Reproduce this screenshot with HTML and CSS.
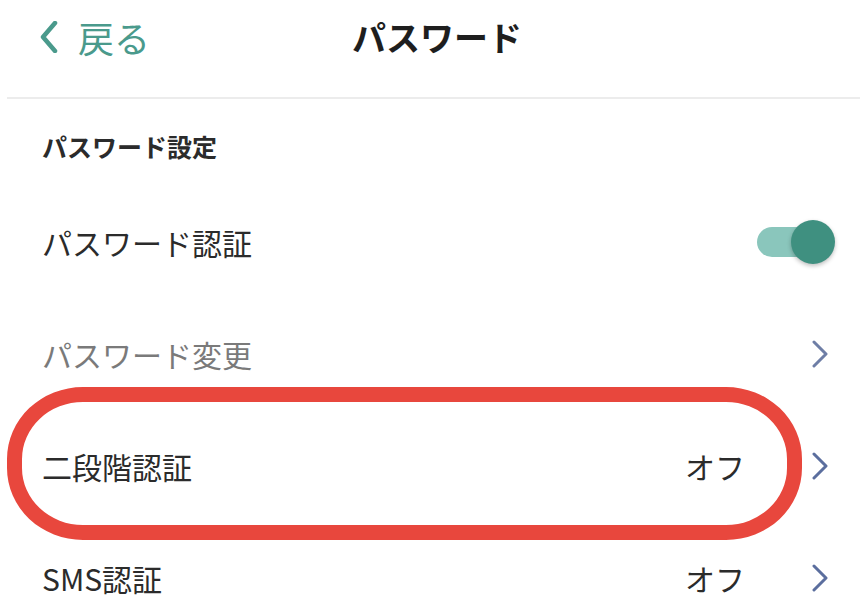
FILE: index.html
```html
<!DOCTYPE html>
<html lang="ja">
<head>
    <meta charset="UTF-8">
    <meta name="viewport" content="width=device-width, initial-scale=1.0">
    <title>パスワード</title>
    <link rel="stylesheet" href="styles.css">
</head>
<body>
    <div class="screen">
        <header class="top-bar">
            <div class="back">
                <svg class="back-icon" width="18" height="32" viewBox="0 0 18 32">
                    <path d="M15 2 L3 16 L15 30" fill="none" stroke="#4a9a8c" stroke-width="4.5" stroke-linecap="round" stroke-linejoin="round"/>
                </svg>
                <span>戻る</span>
            </div>
            <h1 class="title">パスワード</h1>
        </header>

        <div class="section-title">パスワード設定</div>

        <div class="row">
            <span class="label">パスワード認証</span>
            <div class="toggle on">
                <div class="track"></div>
                <div class="knob"></div>
            </div>
        </div>

        <div class="row disabled">
            <span class="label">パスワード変更</span>
            <svg class="chevron" width="18" height="28" viewBox="0 0 18 28">
                <path d="M3 2 L15 14 L3 26" fill="none" stroke="#6e7ea6" stroke-width="3" stroke-linecap="round" stroke-linejoin="round"/>
            </svg>
        </div>

        <div class="row highlighted">
            <span class="label">二段階認証</span>
            <span class="value">オフ</span>
            <svg class="chevron" width="18" height="28" viewBox="0 0 18 28">
                <path d="M3 2 L15 14 L3 26" fill="none" stroke="#5b6e9e" stroke-width="3" stroke-linecap="round" stroke-linejoin="round"/>
            </svg>
            <div class="marker"></div>
        </div>

        <div class="row">
            <span class="label">SMS認証</span>
            <span class="value">オフ</span>
            <svg class="chevron" width="18" height="28" viewBox="0 0 18 28">
                <path d="M3 2 L15 14 L3 26" fill="none" stroke="#5b6e9e" stroke-width="3" stroke-linecap="round" stroke-linejoin="round"/>
            </svg>
        </div>
    </div>
</body>
</html>
```

FILE: styles.css
```css
body {
    margin: 0;
    background-color: #ffffff;
    color: #2b2b2b;
    font-family: "Noto Sans CJK JP", "Noto Sans", sans-serif;
}

.screen {
    width: 860px;
    height: 609px;
    overflow: hidden;
}

.top-bar {
    position: relative;
    display: flex;
    align-items: flex-start;
    height: 97px;
    margin-left: 7px;
    border-bottom: 2px solid #ececec;
}

.back {
    display: flex;
    align-items: center;
    gap: 20px;
    height: 74px;
    padding-left: 33px;
    color: #4a9a8c;
    font-size: 36px;
    line-height: 40px;
}

.back-icon {
    display: block;
}

.title {
    position: absolute;
    left: 0;
    right: 0;
    top: 0;
    margin: 0;
    padding-left: 7px;
    text-align: center;
    font-size: 34px;
    line-height: 74px;
    font-weight: bold;
    color: #1e1e1e;
    pointer-events: none;
}

.section-title {
    padding: 32px 0 25px 42px;
    font-size: 25px;
    line-height: 30px;
    font-weight: bold;
    color: #2b2b2b;
}

.row {
    position: relative;
    display: flex;
    align-items: center;
    height: 112px;
    padding: 0 32px 0 42px;
}

.label {
    flex: 1;
    font-size: 30px;
    line-height: 40px;
}

.value {
    font-size: 30px;
    line-height: 40px;
    margin-right: 66px;
}

.row.disabled .label {
    color: #7a7a7a;
}

.chevron {
    display: block;
    margin-right: -1px;
}

.toggle {
    position: relative;
    width: 82px;
    height: 46px;
    margin-right: -9px;
}

.track {
    position: absolute;
    left: 2px;
    top: 8px;
    width: 60px;
    height: 30px;
    border-radius: 15px;
    background-color: #8ac6bc;
}

.knob {
    position: absolute;
    right: 2px;
    top: 1px;
    width: 44px;
    height: 44px;
    border-radius: 50%;
    background-color: #3f9080;
    box-shadow: 0 2px 4px rgba(0, 0, 0, 0.25);
}

.marker {
    position: absolute;
    left: 7px;
    top: -23px;
    width: 795px;
    height: 153px;
    box-sizing: border-box;
    border: 15px solid #e8473d;
    border-radius: 76px / 72px;
    pointer-events: none;
}
```
